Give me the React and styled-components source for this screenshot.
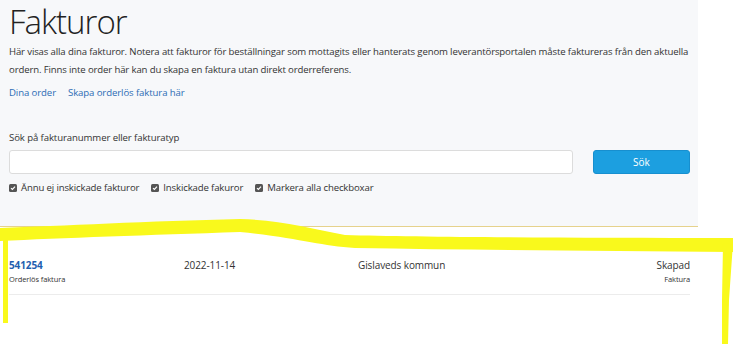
import React from 'react';
import styled, { createGlobalStyle } from 'styled-components';

const Global = createGlobalStyle`
  html, body {
    margin: 0;
    padding: 0;
    background: #fff;
    font-family: 'Open Sans', 'Noto Sans', sans-serif;
    color: #333;
    letter-spacing: -0.1px;
  }
`;

const Page = styled.div`
  position: relative;
  width: 733px;
  height: 344px;
  overflow: hidden;
`;

const Panel = styled.div`
  width: 698px;
  height: 227px;
  box-sizing: border-box;
  background: #f7f8fa;
  border-bottom: 1px solid #e6d28c;
  padding: 0 8px 0 9px;
`;

const Title = styled.h1`
  margin: 0;
  padding-top: 2px;
  font-size: 33px;
  line-height: 40px;
  font-weight: 300;
  color: #222;
  letter-spacing: -1px;
`;

const Intro = styled.p`
  margin: 1px 0 0;
  font-size: 9.6px;
  line-height: 18px;
  color: #333;
  white-space: nowrap;
  letter-spacing: -0.14px;
`;

const Links = styled.div`
  display: flex;
  gap: 12px;
  margin-top: 6px;
  font-size: 9.6px;
  line-height: 16px;
`;

const Link = styled.a`
  color: #2d6db5;
  text-decoration: none;
`;

const Label = styled.div`
  margin-top: 29px;
  font-size: 9.6px;
  line-height: 16px;
`;

const SearchRow = styled.div`
  display: flex;
  align-items: stretch;
  gap: 20px;
  margin-top: 4px;
  height: 24px;
`;

const Input = styled.input`
  width: 564px;
  box-sizing: border-box;
  border: 1px solid #dcdcdc;
  border-radius: 3px;
  background: #fff;
  outline: none;
`;

const Button = styled.button`
  width: 97px;
  border: 1px solid #178fcf;
  border-radius: 3px;
  background: #1c9fe0;
  color: #fff;
  font-family: inherit;
  font-size: 10px;
  padding: 0;
`;

const Checks = styled.div`
  display: flex;
  gap: 12px;
  margin-top: 6px;
  font-size: 9.6px;
  line-height: 16px;
  letter-spacing: -0.14px;
`;

const CheckItem = styled.label`
  display: flex;
  align-items: center;
  gap: 4px;
`;

const Box = styled.span`
  display: inline-flex;
  width: 8px;
  height: 8px;
  border-radius: 1.5px;
  background: #555;
  align-items: center;
  justify-content: center;
`;

const List = styled.div`
  padding: 30px 43px 0 9px;
`;

const Row = styled.div`
  display: grid;
  grid-template-columns: 175px 174px 1fr auto;
  padding-bottom: 9px;
  border-bottom: 1px solid #ececec;
`;

const Cell = styled.div`
  text-align: ${(p) => (p.$right ? 'right' : 'left')};
`;

const Main = styled.div`
  font-size: 10px;
  line-height: 16px;
  color: ${(p) => (p.$link ? '#1f5fb0' : '#333')};
  font-weight: ${(p) => (p.$link ? 700 : 400)};
`;

const Sub = styled.div`
  font-size: 7.5px;
  line-height: 12px;
  color: #333;
`;

const Marker = styled.svg`
  position: absolute;
  left: 0;
  top: 0;
  pointer-events: none;
`;

const Check = () => (
  <Box>
    <svg width="6" height="6" viewBox="0 0 6 6">
      <path d="M1 3.1 L2.4 4.5 L5 1.6" fill="none" stroke="#fff" strokeWidth="1.2" />
    </svg>
  </Box>
);

const filters = ['Ännu ej inskickade fakturor', 'Inskickade fakuror', 'Markera alla checkboxar'];

export default function App() {
  return (
    <Page>
      <Global />
      <Panel>
        <Title>Fakturor</Title>
        <Intro>
          Här visas alla dina fakturor. Notera att fakturor för beställningar som mottagits eller hanterats genom leverantörsportalen måste faktureras från den aktuella
          <br />
          ordern. Finns inte order här kan du skapa en faktura utan direkt orderreferens.
        </Intro>
        <Links>
          <Link href="#">Dina order</Link>
          <Link href="#">Skapa orderlös faktura här</Link>
        </Links>
        <Label>Sök på fakturanummer eller fakturatyp</Label>
        <SearchRow>
          <Input type="text" />
          <Button>Sök</Button>
        </SearchRow>
        <Checks>
          {filters.map((f) => (
            <CheckItem key={f}>
              <Check />
              {f}
            </CheckItem>
          ))}
        </Checks>
      </Panel>
      <List>
        <Row>
          <Cell>
            <Main $link>541254</Main>
            <Sub>Orderlös faktura</Sub>
          </Cell>
          <Cell>
            <Main>2022-11-14</Main>
          </Cell>
          <Cell>
            <Main>Gislaveds kommun</Main>
          </Cell>
          <Cell $right>
            <Main>Skapad</Main>
            <Sub>Faktura</Sub>
          </Cell>
        </Row>
      </List>
      <Marker width="733" height="344" viewBox="0 0 733 344">
        <path
          d="M0 228 C60 226 150 221 240 219 C280 220 310 228 345 235 C420 237 560 238 733 238 L733 252 C600 251 480 250 355 248 C320 246 300 238 240 232 C150 235 60 238 0 241 Z"
          fill="#f9f91c"
        />
        <path d="M3 236 L8 236 L8 323 L3 323 Z" fill="#f9f91c" />
        <path d="M723 244 L733 243 L729 300 L728 344 L722 344 L722 300 Z" fill="#f9f91c" />
      </Marker>
    </Page>
  );
}
